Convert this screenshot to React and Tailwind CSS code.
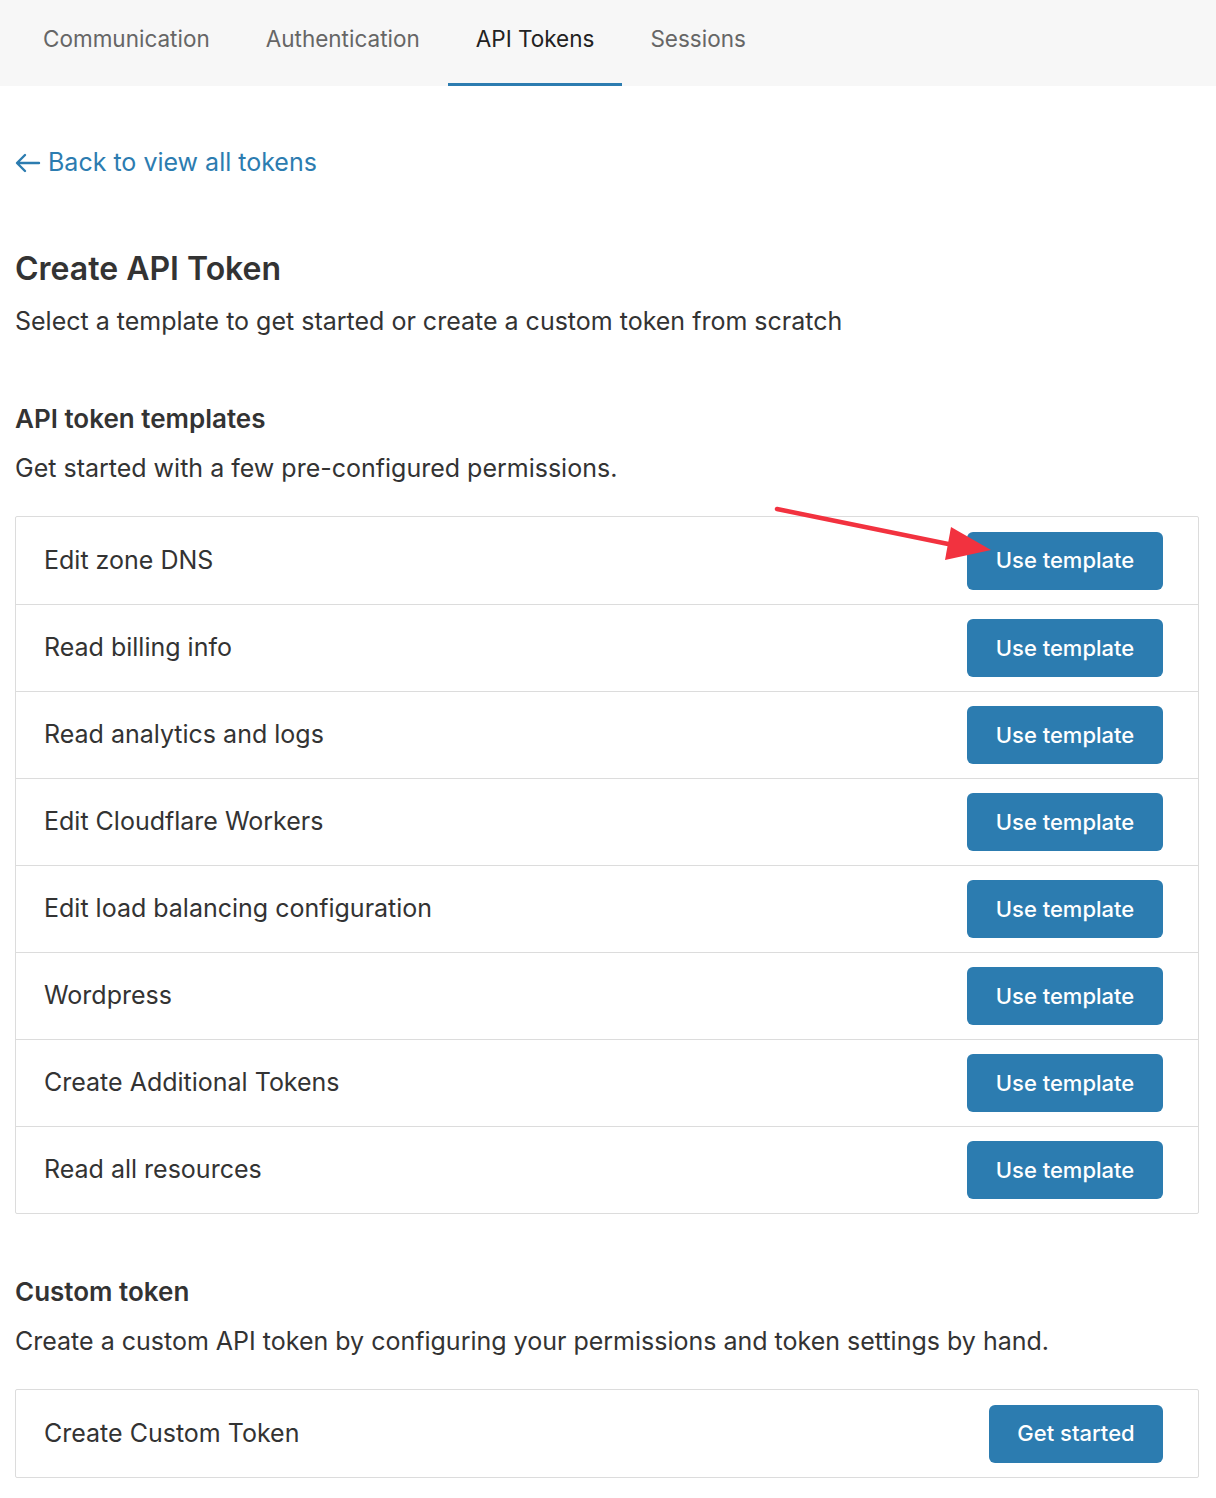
import React from 'react';

const templates = [
  'Edit zone DNS',
  'Read billing info',
  'Read analytics and logs',
  'Edit Cloudflare Workers',
  'Edit load balancing configuration',
  'Wordpress',
  'Create Additional Tokens',
  'Read all resources',
];

const tabs = ['Communication', 'Authentication', 'API Tokens', 'Sessions'];

const Row = ({ label, action, wide, first }) => (
  <div
    className={`flex items-center justify-between h-[87px] pl-[28px] pr-[35px] ${
      first ? '' : 'border-t border-[#dcdcdc]'
    }`}
  >
    <span className="text-[25px] text-[#333]">{label}</span>
    <button
      className={`h-[58px] rounded-[6px] bg-[#2c7cb0] text-white text-[22px] font-medium ${
        wide ? 'w-[196px]' : 'w-[174px]'
      }`}
    >
      {action}
    </button>
  </div>
);

const App = () => {
  return (
    <div className="w-[1216px] min-h-[1498px] bg-white font-['Inter',sans-serif] text-[#333]">
      {/* tab bar */}
      <div className="h-[86px] bg-[#f7f7f7] flex pl-[15px]">
        {tabs.map((t) => (
          <div
            key={t}
            className={`px-[28px] flex items-center text-[22.5px] pb-[6px] ${
              t === 'API Tokens'
                ? 'text-[#222] border-b-[3px] border-[#2c7cb0]'
                : 'text-[#666] border-b-[3px] border-transparent'
            }`}
          >
            {t}
          </div>
        ))}
      </div>

      <div className="px-[15px]">
        <a href="#" className="mt-[62px] flex items-center gap-[7px] text-[#2c7cb0] text-[25px] h-[30px]">
          <svg width="26" height="20" viewBox="0 0 26 20" fill="none" stroke="currentColor" strokeWidth="2.4" strokeLinecap="round" strokeLinejoin="round">
            <path d="M24 10H3M10 2L2 10l8 8" />
          </svg>
          Back to view all tokens
        </a>

        <h1 className="mt-[71px] text-[32px] font-semibold text-[#333] leading-[40px]">Create API Token</h1>
        <p className="mt-[17px] text-[25px] leading-[30px]">
          Select a template to get started or create a custom token from scratch
        </p>

        <h2 className="mt-[68px] text-[26px] font-semibold leading-[30px]">API token templates</h2>
        <p className="mt-[19px] text-[25px] leading-[30px]">Get started with a few pre-configured permissions.</p>

        <div className="relative mt-[33px] border border-[#dcdcdc] rounded-[2px] w-[1184px]">
          {templates.map((t, i) => (
            <Row key={t} label={t} action="Use template" wide first={i === 0} />
          ))}
          <svg
            className="absolute left-[757px] top-[-12px] pointer-events-none"
            width="230"
            height="70"
            viewBox="0 0 230 70"
          >
            <line x1="4" y1="4" x2="185" y2="41" stroke="#f2323f" strokeWidth="4.5" strokeLinecap="round" />
            <polygon points="218,45 178,22 172,55" fill="#f2323f" />
          </svg>
        </div>

        <h2 className="mt-[63px] text-[26px] font-semibold leading-[30px]">Custom token</h2>
        <p className="mt-[19px] text-[25px] leading-[30px]">
          Create a custom API token by configuring your permissions and token settings by hand.
        </p>

        <div className="mt-[33px] border border-[#dcdcdc] rounded-[2px] w-[1184px]">
          <Row label="Create Custom Token" action="Get started" first />
        </div>
      </div>
    </div>
  );
};

export default App;
